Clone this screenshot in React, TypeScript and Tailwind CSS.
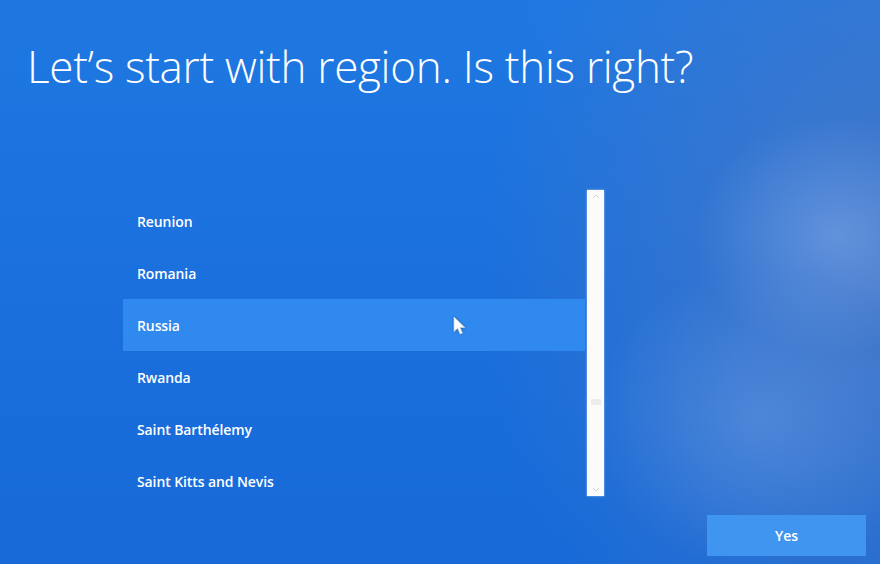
const regions = [
  'Reunion',
  'Romania',
  'Russia',
  'Rwanda',
  'Saint Barthélemy',
  'Saint Kitts and Nevis',
];

function Cursor() {
  return (
    <svg width="13" height="19" viewBox="0 0 13 19" className="drop-shadow-[0_0_1px_rgba(0,0,0,0.35)]">
      <path d="M1 1 L1 15.5 L4.6 12.2 L7.2 18 L9.4 17 L6.9 11.4 L11.8 11.4 Z" fill="#ffffff" stroke="#c9d6e6" strokeWidth="0.8" strokeLinejoin="round" />
    </svg>
  );
}

function Scrollbar() {
  return (
    <div className="w-[17px] h-[306px] bg-[#fbfbfb] flex flex-col items-center justify-between py-[4px] shadow-[0_0_2px_rgba(255,255,255,0.6)]">
      <svg width="8" height="5" viewBox="0 0 8 5">
        <path d="M1 4 L4 1 L7 4" fill="none" stroke="#d6d6d6" strokeWidth="1" />
      </svg>
      <div className="w-[10px] h-[6px] bg-[#ececec] mt-[200px]" />
      <svg width="8" height="5" viewBox="0 0 8 5" className="mt-auto">
        <path d="M1 1 L4 4 L7 1" fill="none" stroke="#cfcfcf" strokeWidth="1" />
      </svg>
    </div>
  );
}

export default function App() {
  const selected = 'Russia';

  return (
    <div
      className="w-[880px] h-[564px] overflow-hidden flex flex-col text-white bg-[#1b6fdc] bg-[radial-gradient(ellipse_140px_120px_at_835px_235px,rgba(140,180,240,0.45),transparent),radial-gradient(ellipse_170px_150px_at_760px_420px,rgba(120,165,230,0.4),transparent),radial-gradient(ellipse_420px_520px_at_900px_260px,rgba(75,120,195,0.85),transparent),linear-gradient(180deg,#1f78e2_0%,#1a6fdc_55%,#176ad8_100%)]"
      style={{ fontFamily: '"Open Sans", "Noto Sans", sans-serif' }}
    >
      {/* Heading */}
      <h1 className="pl-[27px] pt-[38px] text-[44px] leading-[56px] font-light tracking-[-0.3px] text-white">
        Let’s start with region. Is this right?
      </h1>

      {/* Region list with scrollbar */}
      <div className="flex mt-[96px] ml-[123px]">
        <div className="relative w-[462px] h-[306px] pt-[5px] flex flex-col overflow-hidden">
          {regions.map((r) => (
            <div
              key={r}
              className={`shrink-0 h-[52px] flex items-center pl-[14px] text-[14px] font-semibold tracking-[-0.1px] ${
                r === selected ? 'bg-[#3089ee]' : ''
              }`}
            >
              {r}
            </div>
          ))}
          <div className="absolute left-[330px] top-[126px]">
            <Cursor />
          </div>
        </div>
        <div className="ml-[2px]">
          <Scrollbar />
        </div>
      </div>

      {/* Footer */}
      <div className="flex justify-end pr-[14px] mt-[19px]">
        <button className="w-[159px] h-[41px] bg-[#3f95f0] text-white text-[14px] font-semibold">
          Yes
        </button>
      </div>
    </div>
  );
}
